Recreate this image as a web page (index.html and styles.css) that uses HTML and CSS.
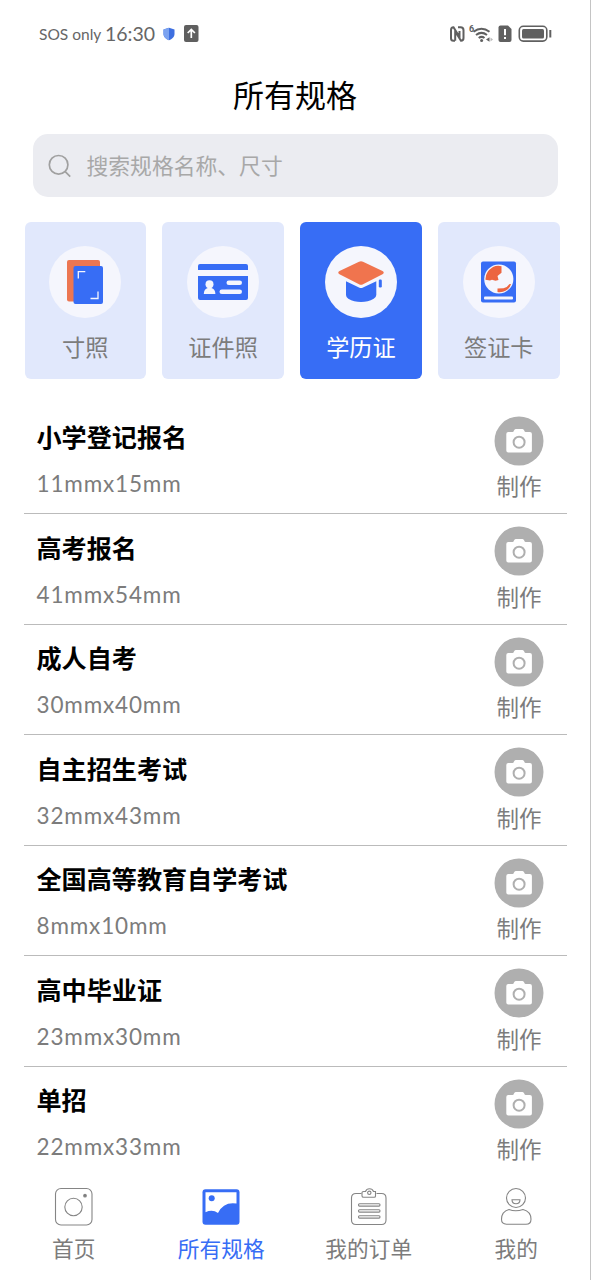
FILE: index.html
```html
<!DOCTYPE html>
<html lang="zh-CN">
<head>
<meta charset="utf-8">
<title>所有规格</title>
<link rel="stylesheet" href="styles.css">
</head>
<body>
<svg width="0" height="0" class="defs">
  <symbol id="camera" viewBox="0 0 50 50">
    <circle cx="25" cy="25" r="24.5" fill="#afafaf"/>
    <path d="M14.300 16h4.200q1 0 1.500-1.500.5-1.500 1.700-1.500h6.800q1.200 0 1.700 1.500.5 1.500 1.500 1.500h4.200a2 2 0 0 1 2 2v16.500a2 2 0 0 1-2 2H14.300a2 2 0 0 1-2-2V18a2 2 0 0 1 2-2z" fill="#fff"/>
    <circle cx="25.100" cy="26.200" r="5.500" fill="#fff" stroke="#afafaf" stroke-width="2"/>
  </symbol>
</svg>
<div class="screen">
  <header class="status">
    <span class="carrier">SOS only</span>
    <span class="clock">16:30</span>
    <svg class="shield" width="12" height="14" viewBox="0 0 12 14"><path d="M6 .7 11.500 2.600V7c0 3-2.500 5.200-5.500 6.300C3 12.200.5 10 .5 7V2.600z" fill="#3e6fe0"/><path d="M6 .7V13.300C3 12.200.5 10 .5 7V2.600z" fill="#7ba2f0"/></svg>
    <svg class="upload" width="15" height="17" viewBox="0 0 15 17"><rect width="14.500" height="17" rx="2" fill="#5f5f5f"/><path d="M7.300 13V4.500M3.700 8l3.600-3.600L10.900 8" fill="none" stroke="#fff" stroke-width="1.700"/></svg>
    <svg class="tray" width="106" height="20" viewBox="0 0 106 20">
      <g fill="none" stroke="#606060">
        <path d="M7 16.700H5.500Q3 16.700 3 14.200V6q0-2.800 2.500-2.800L11.500 13V7M7.200 6.500v10.200M10 3.200h2.500q3 0 3 3v7.700q0 2.800-2.500 2.800L7.200 7.500" stroke-width="2"/>
        <path d="M25.500 7.800q8-6 16 0M28 11q5.500-4.200 11 0M30.700 14q3-2.300 5.800 0" stroke-width="2"/>
        <rect x="71.300" y="2.300" width="27.500" height="14.800" rx="4" stroke-width="1.600"/>
        <path d="M102.300 6v7.500" stroke-width="2"/>
      </g>
      <circle cx="33.600" cy="16.500" r="1.500" fill="#606060"/>
      <path d="m38 15.500 3.500-2.200v4.400z" fill="#606060"/><path d="m42.500 13.500 2.500 2-2.500 2z" fill="#bbb"/>
      <text x="21" y="7.500" class="wifi-gen">6</text>
      <path d="M53.300 1.500H60l3.500 3.500v11q0 2-2 2h-9q-2 0-2-2V3.500q0-2 2-2z" fill="#606060"/>
      <path d="M57 5v6.300M57 13v2.100" stroke="#fff" stroke-width="2"/>
      <rect x="74" y="4.900" width="22" height="9.700" rx="1.500" fill="#606060"/>
    </svg>
  </header>

  <h1 class="title">所有规格</h1>

  <div class="search">
    <svg width="24" height="24" viewBox="0 0 24 24"><circle cx="10.600" cy="10.800" r="9.300"/><path d="m17.200 17.600 5 5"/></svg>
    <span>搜索规格名称、尺寸</span>
  </div>

  <nav class="tabs">
    <div class="tab">
      <svg class="badge" viewBox="0 0 72 72"><circle cx="36" cy="36" r="36" fill="#f5f6fd"/><rect x="18" y="14" width="33" height="41.500" rx="2" fill="#ec7652"/><rect x="24.500" y="20" width="29.500" height="38" rx="2" fill="#376df5"/><path d="M29.300 32.500v-6.800h7M49 45.500v7h-7.500" fill="none" stroke="#f5f6fd" stroke-width="1.300"/></svg>
      <span>寸照</span>
    </div>
    <div class="tab">
      <svg class="badge" viewBox="0 0 72 72"><circle cx="36" cy="36" r="36" fill="#f5f6fd"/><path d="M13 18h46q2 0 2 2v4H11v-4q0-2 2-2zM11 30h50v22q0 2-2 2H13q-2 0-2-2z" fill="#376df5"/><g fill="#f5f6fd"><circle cx="22.500" cy="38.300" r="4"/><path d="M20.800 40h3.600v2q3.900 1.200 4 6H16.800q.1-4.800 4-6z"/><rect x="39.500" y="34.500" width="15.500" height="4.600" rx="2.300"/><rect x="32.500" y="43.500" width="22.500" height="4.600" rx="2.300"/></g></svg>
      <span>证件照</span>
    </div>
    <div class="tab active">
      <svg class="badge" viewBox="0 0 72 72"><circle cx="36" cy="36" r="36" fill="#f5f6fd"/><path d="M34 15.800q2-1 4 0L57.500 25q2.500 1.600 0 3.300L38 38.300q-2 1-4 0L14.500 28.300q-2.500-1.700 0-3.300z" fill="#f0744e"/><path d="M21 35.200 34 41.500q2 1 4 0l13.300-6.300V49q0 2-2.600 3.700-5.700 3.300-12.700 3.300t-12.700-3.300Q21 51 21 49z" fill="#376df5"/><rect x="53.800" y="33.500" width="3" height="8" rx="1.200" fill="#376df5"/></svg>
      <span>学历证</span>
    </div>
    <div class="tab">
      <svg class="badge" viewBox="0 0 72 72"><circle cx="36" cy="36" r="36" fill="#f5f6fd"/><rect x="18" y="15.500" width="35" height="41" rx="2" fill="#376df5"/><circle cx="35.800" cy="33" r="14.600" fill="#f5f6fd"/><path d="M38.500 20.200v6.500l-4 3.300 1 4-3 .7-3.500-1-2 .7-4.500-.6Q22 26 30 21q4-2 8.500-.8zM34.500 42.500l6-.2q4-1 6-4.300h1.500q-1 4-5 6.500-4 2.300-8.500 1.500z" fill="#ec6540"/><rect x="21" y="50.500" width="29" height="3" rx="1" fill="#f5f6fd"/></svg>
      <span>签证卡</span>
    </div>
  </nav>

  <main class="list">
    <div class="row"><div class="info"><b>小学登记报名</b><span>11mmx15mm</span></div><div class="make"><svg><use href="#camera"/></svg><span>制作</span></div></div>
    <div class="row"><div class="info"><b>高考报名</b><span>41mmx54mm</span></div><div class="make"><svg><use href="#camera"/></svg><span>制作</span></div></div>
    <div class="row"><div class="info"><b>成人自考</b><span>30mmx40mm</span></div><div class="make"><svg><use href="#camera"/></svg><span>制作</span></div></div>
    <div class="row"><div class="info"><b>自主招生考试</b><span>32mmx43mm</span></div><div class="make"><svg><use href="#camera"/></svg><span>制作</span></div></div>
    <div class="row"><div class="info"><b>全国高等教育自学考试</b><span>8mmx10mm</span></div><div class="make"><svg><use href="#camera"/></svg><span>制作</span></div></div>
    <div class="row"><div class="info"><b>高中毕业证</b><span>23mmx30mm</span></div><div class="make"><svg><use href="#camera"/></svg><span>制作</span></div></div>
    <div class="row"><div class="info"><b>单招</b><span>22mmx33mm</span></div><div class="make"><svg><use href="#camera"/></svg><span>制作</span></div></div>
  </main>

  <footer class="bottom">
    <div class="item"><svg viewBox="0 0 40 40"><rect x="1.500" y="1.500" width="36.500" height="36.500" rx="5.500"/><circle cx="19.500" cy="20" r="8.700"/><circle cx="31" cy="8.700" r="1.300" fill="#777"/></svg><span>首页</span></div>
    <div class="item current"><svg viewBox="0 0 40 40"><rect x="1.500" y="2.200" width="37" height="35.500" rx="3" fill="#376df5" stroke="none"/><path d="M4.500 5.200h31v11.300q-13-2-18.500 9.500-5.500-4-12.500-.8z" fill="#fff" stroke="none"/><circle cx="10.700" cy="11.200" r="3" fill="#376df5" stroke="none"/></svg><span>所有规格</span></div>
    <div class="item"><svg viewBox="0 0 40 40"><path d="M12.500 6.500H7q-4.500 0-4.500 4.500v22q0 4.500 4.500 4.500h25.500q4.500 0 4.500-4.500V11q0-4.500-4.500-4.500h-5"/><path d="M14.500 4.500h2q1-2.800 4-2.800t4 2.800h2V9q0 1.300-1.300 1.300h-10.400Q13 10.300 13 9V5.500q0-1 1.500-1z"/><circle cx="20.300" cy="5.800" r="1.700"/><rect x="9.500" y="16.700" width="21.500" height="2.400" rx="1"/><rect x="9.500" y="22.700" width="21.500" height="2.400" rx="1"/><rect x="9.500" y="28.700" width="21.500" height="2.400" rx="1"/></svg><span>我的订单</span></div>
    <div class="item"><svg viewBox="0 0 40 40"><circle cx="20" cy="11" r="9.500"/><path d="M16 12.700h8q0 4-4 4t-4-4zM13 22.500q6.500 2.500 14 0 8 2 8 9.700 0 5-5 5H10.500q-5 0-5-5 0-7.500 7.500-9.700z"/></svg><span>我的</span></div>
  </footer>
</div>
</body>
</html>
```
FILE: styles.css
```css
* { box-sizing: border-box; }
body {
  margin: 0;
  background: #fff;
  font-family: "Noto Sans CJK SC", sans-serif;
  color: #7c7c7c;
}
.defs { display: block; }
.screen {
  width: 591px;
  height: 1280px;
  overflow: hidden;
  display: flex;
  flex-direction: column;
  border-right: 1px solid #c4c4c4;
}
.status {
  height: 67px;
  flex: none;
  display: flex;
  align-items: center;
  padding: 0 36px 0 39px;
  color: #666;
  font-family: Lato, sans-serif;
  white-space: nowrap;
}
.carrier { width: 66px; font-size: 15.5px; }
.clock { width: 58px; font-size: 19.5px; }
.upload { margin-left: 9px; }
.tray { margin-left: auto; }
.wifi-gen { font: bold 9px Roboto, sans-serif; fill: #606060; }
.title {
  margin: 0;
  height: 67px;
  flex: none;
  line-height: 54px;
  text-align: center;
  font-size: 31px;
  font-weight: 400;
  color: #000;
}
.search {
  height: 63px;
  flex: none;
  margin: 0 32px 0 33px;
  padding-left: 15px;
  border-radius: 15px;
  background: #ebecf1;
  display: flex;
  align-items: center;
  gap: 14.5px;
  color: #a8a8a8;
  font-size: 21.8px;
  line-height: 60px;
}
.search svg { fill: none; stroke: #a0a0a0; stroke-width: 1.7; }
.search span { padding-bottom: 2px; }
.tabs {
  display: grid;
  grid-template-columns: repeat(4, 1fr);
  gap: 16.3px;
  margin: 25px 30.5px 0 24.5px;
  flex: none;
}
.tab {
  height: 157px;
  padding-top: 23.5px;
  border-radius: 6px;
  background: #e1e8fc;
  display: flex;
  flex-direction: column;
  align-items: center;
  font-size: 23.2px;
  line-height: 34px;
}
.badge { width: 72px; height: 72px; margin-bottom: 11px; }
.active { background: #376df5; color: #fff; }
.list { margin: 24.5px 23px 0 24px; flex: none; }
.row {
  height: 110.5px;
  display: flex;
  justify-content: space-between;
  border-bottom: 1px solid #bbb;
  padding: 12.5px 23px 0 12.5px;
}
.row:last-child { border: 0; }
.info { display: flex; flex-direction: column; }
.info b { color: #000; font-size: 25.1px; font-weight: 700; line-height: 40px; }
.info span {
  font-family: Lato, sans-serif;
  font-size: 22.5px;
  letter-spacing: 0.85px;
  line-height: 30px;
  margin-top: 13px;
}
.make {
  display: flex;
  flex-direction: column;
  align-items: center;
  width: 50px;
  font-size: 22.5px;
  line-height: 34px;
}
.make svg { width: 50px; height: 50px; margin-top: -0.5px; margin-bottom: 2.5px; }
.bottom {
  display: grid;
  grid-template-columns: repeat(4, 1fr);
  margin-top: 9.5px;
}
.item {
  display: flex;
  flex-direction: column;
  align-items: center;
  font-size: 21.7px;
  line-height: 34px;
}
.item svg { width: 40px; height: 40px; margin-bottom: 4px; fill: none; stroke: #858585; stroke-width: 1.1; }
.current { color: #376df5; }
```
